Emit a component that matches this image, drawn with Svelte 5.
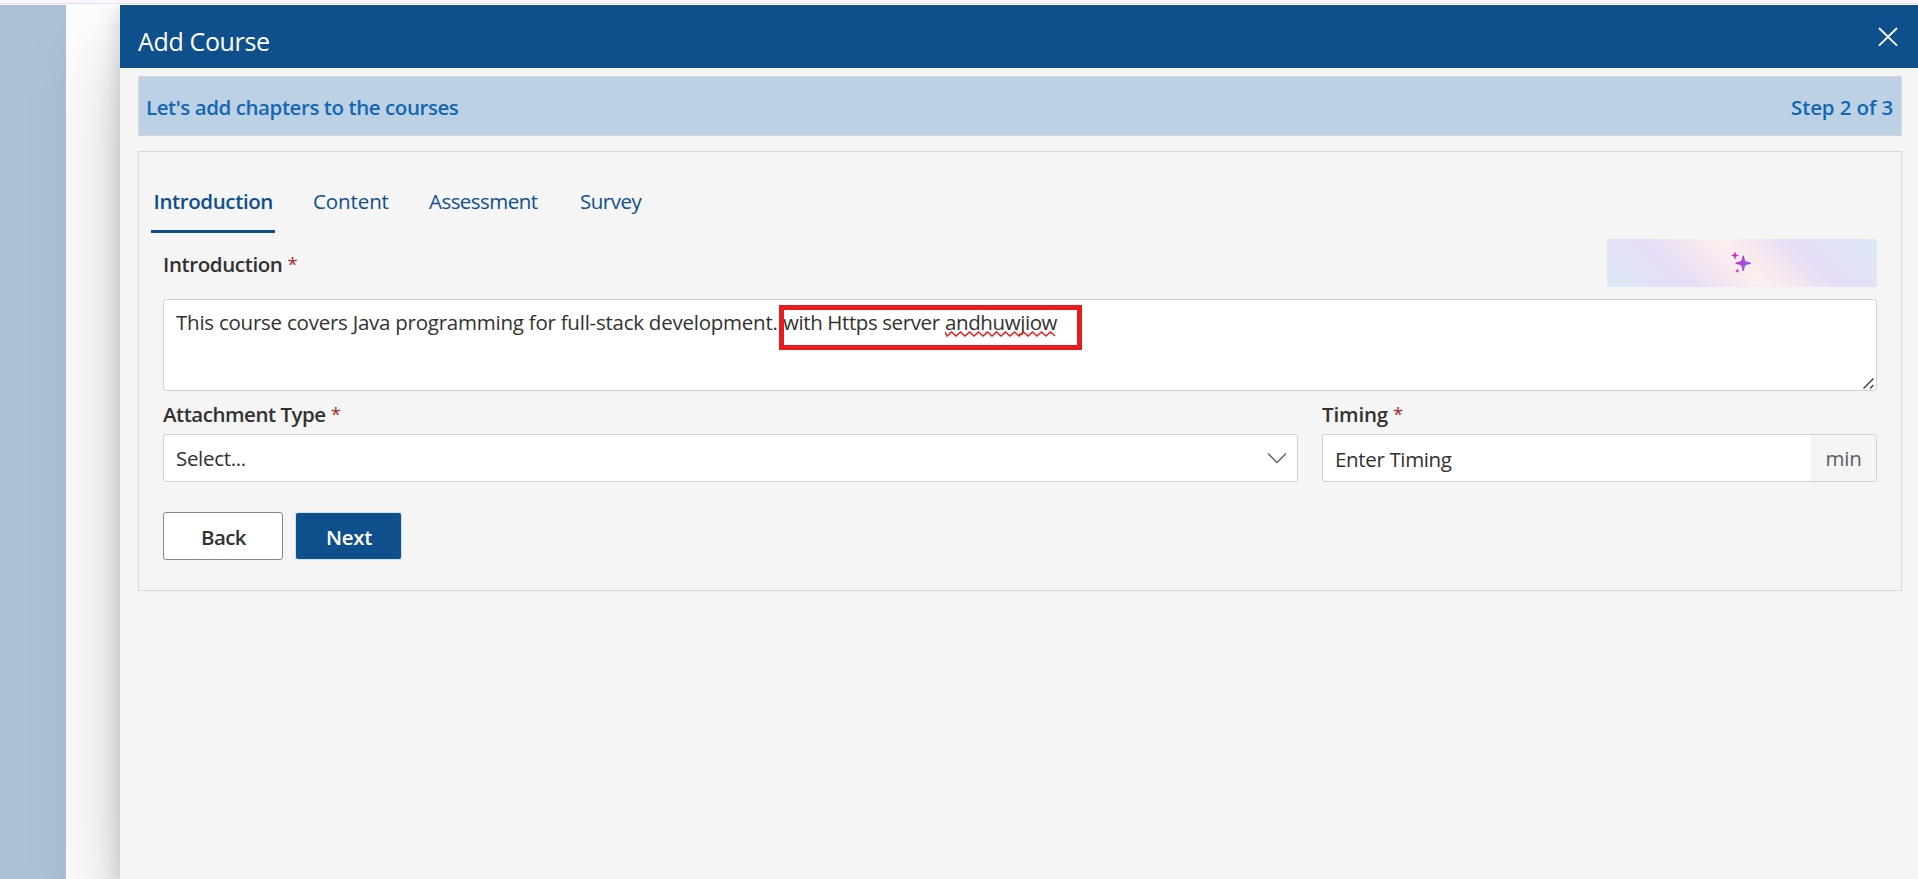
<script>
  const tabs = [
    { name: 'Introduction', cls: 'active' },
    { name: 'Content', cls: 'content' },
    { name: 'Assessment', cls: 'assessment' },
    { name: 'Survey', cls: 'survey' }
  ];
  const wave = 'M0 1 ' + Array.from({ length: 25 }, (_, i) => `L${2 + i * 4.5} ${i % 2 ? 1 : 5}`).join(' ');
</script>

<div class="page">
  <div class="topline"></div>
  <div class="stage">
    <aside></aside>
    <div class="gap"></div>
    <main>
      <header>
        <h1>Add Course</h1>
        <svg class="close" width="20" height="20" viewBox="0 0 20 20"><path d="M1 1 19 18.6M19 1 1 18.6" /></svg>
      </header>
      <section class="banner">
        <span class="lead">Let's add chapters to the courses</span>
        <span class="step">Step 2 of 3</span>
      </section>
      <section class="card">
        <nav>
          {#each tabs as tab}
            <button class="tab {tab.cls}">{tab.name}</button>
          {/each}
        </nav>
        <div class="intro-row">
          <div class="label intro"><span>Introduction</span><i>*</i></div>
          <button class="ai" aria-label="Generate">
            <svg width="24" height="24" viewBox="0 0 24 24">
              <defs>
                <linearGradient id="spark" gradientUnits="userSpaceOnUse" x1="2" y1="4" x2="22" y2="16">
                  <stop offset="0" stop-color="#ee10c0" />
                  <stop offset=".55" stop-color="#a948dc" />
                  <stop offset="1" stop-color="#6a78ee" />
                </linearGradient>
              </defs>
              <path fill="url(#spark)" d="M13.2 4.5c.4 0 .7.3.8.7l.7 3.2c.3 1.300.9 1.900 2.200 2.200l3.500.8c.9.2.9 1.400 0 1.600l-3.500.8c-1.300.3-1.900.9-2.200 2.200l-.7 3.400c-.2.9-1.400.9-1.600 0l-.7-3.400c-.3-1.300-.9-1.900-2.200-2.200l-3.400-.8c-.9-.2-.9-1.400 0-1.600l3.400-.8c1.300-.3 1.900-.9 2.200-2.200l.7-3.200c.1-.4.4-.7.8-.7z" />
              <path fill="#e31cc6" d="M5 .8Q5.700.8 5.900 3.600 8.700 3.900 8.700 4.500T5.900 5.400Q5.700 8.200 5 8.200T4.100 5.400Q1.300 5.100 1.300 4.500T4.100 3.600Q4.300.8 5 .8Z" />
              <path fill="#b844d8" d="M7.300 17.800Q7.800 19.400 9.400 20 7.800 20.500 7.300 22 6.800 20.500 5.200 20 6.800 19.400 7.300 17.800Z" />
            </svg>
          </button>
        </div>
        <div class="area">
          <span class="t1">This course covers Java programming for full-stack development.</span>
          <span class="t2">with Https server</span>
          <span class="t3">andhuwjiow<svg class="wave" width="112" height="7" viewBox="0 0 112 7"><path d={wave} /></svg></span>
          <div class="marker"></div>
          <svg class="grip" width="13" height="13" viewBox="0 0 13 13"><path d="M1.500 11.500 11.500 1.500M8 11.500 11.500 8" /></svg>
        </div>
        <div class="fields">
          <div>
            <div class="label attach"><span>Attachment Type</span><i>*</i></div>
            <div class="box select">
              <span>Select...</span>
              <svg width="20" height="12" viewBox="0 0 20 12"><path d="M1 1.500 10 10.500 19 1.500" /></svg>
            </div>
          </div>
          <div>
            <div class="label time"><span>Timing</span><i>*</i></div>
            <div class="box timing"><span>Enter Timing</span><em>min</em></div>
          </div>
        </div>
        <div class="actions">
          <button class="back">Back</button>
          <button class="next">Next</button>
        </div>
      </section>
    </main>
  </div>
</div>

<style>
  :global(body) { background: #fff; overflow: hidden; }
  .page { height: 879px; display: flex; flex-direction: column; font: 20.5px/28px "Open Sans", "Noto Sans", sans-serif; color: #323130; overflow: hidden; }
  .page * { box-sizing: border-box; }
  button { font: inherit; color: inherit; border: 0; background: none; padding: 0; margin: 0; }
  .topline { height: 5px; flex: none; background: linear-gradient(#fdf5fe 3px, #e4dbe8 3px 4px, #fcfafd 4px); }
  .stage { flex: 1; display: flex; overflow: hidden; }
  aside { width: 66px; background: #abc1d8; }
  .gap { width: 54px; background: #fff; }
  main { flex: 1; background: #f5f5f5; box-shadow: 0 38px 86px rgba(0, 0, 0, .22), 0 7px 21px rgba(0, 0, 0, .18); }
  header { height: 63px; background: #0f4f8b; color: #fff; display: flex; justify-content: space-between; padding: 20px 20px 0 18px; }
  h1 { margin: 0; font-size: 25px; line-height: 32px; font-weight: 400; letter-spacing: -.35px; }
  .close { margin-top: 2px; stroke: #fff; stroke-width: 1.800; fill: none; }
  .banner { margin: 8px 16px 0 18px; height: 60px; border: 1px solid #d5d7d8; background: #bdd1e5; color: #1267b4; font-weight: 600; display: flex; justify-content: space-between; align-items: center; padding: 2px 8px 0 7px; }
  .lead { letter-spacing: -.43px; }
  .step { letter-spacing: -.12px; }
  .card { margin: 15px 16px 0 18px; height: 440px; border: 1px solid #d8d8d8; padding: 26px 24px 0; }
  nav { display: flex; height: 55px; color: #0f4f8b; margin-left: -12px; }
  .tab { height: 55px; padding-bottom: 9px; text-align: left; }
  .active { width: 124px; margin-right: 38px; padding-left: 2.500px; font-weight: 600; letter-spacing: -.38px; border-bottom: 3px solid #0f4f8b; padding-bottom: 6px; }
  .content { width: 116px; letter-spacing: -.1px; }
  .assessment { width: 151px; letter-spacing: -.55px; }
  .survey { letter-spacing: -.5px; }
  .intro-row { height: 66px; padding-top: 6px; display: flex; justify-content: space-between; }
  .label { display: flex; gap: 5px; font-weight: 600; height: 28px; }
  .label i { color: #a4262c; font-style: normal; font-weight: 400; font-size: 18.5px; }
  .intro { margin-top: 11px; letter-spacing: -.38px; }
  .attach { letter-spacing: -.48px; }
  .time { letter-spacing: -.15px; }
  .ai { width: 270px; height: 48px; border-radius: 3px; background: linear-gradient(45deg, #dbe9f6, #e7ddf6 27%, #fdefee 50%, #e7ddf6 73%, #dbe9f6); display: flex; align-items: center; justify-content: center; }
  .area { position: relative; height: 92px; border: 1px solid #d0d0d0; border-radius: 3px; background: #fff; display: flex; padding: 8px 12px; white-space: pre; }
  .t1 { width: 607px; letter-spacing: -.24px; }
  .t2 { width: 162px; letter-spacing: -.4px; }
  .t3 { position: relative; letter-spacing: -.4px; }
  .wave { position: absolute; left: 0; top: 23px; fill: none; stroke: #f01818; stroke-width: 1.400; }
  .marker { position: absolute; left: 614.500px; top: 5px; width: 303px; height: 45px; border: 5px solid #e81c1e; }
  .grip { position: absolute; right: 1px; bottom: 0; stroke: #505050; stroke-width: 1.700; }
  .fields { display: grid; grid-template-columns: 1135px 555px; gap: 24px; padding-top: 9px; }
  .box { height: 48px; margin-top: 6px; border: 1px solid #d0d0d0; border-radius: 3px; background: #fff; display: flex; align-items: center; justify-content: space-between; }
  .select { padding: 0 10px 0 12px; letter-spacing: -.32px; }
  .select svg { fill: none; stroke: #605e5c; stroke-width: 1.300; }
  .timing { padding-left: 12px; letter-spacing: -.35px; }
  .timing span { padding-top: 2px; }
  em { width: 65px; height: 46px; line-height: 46px; text-align: center; background: #f4f4f4; color: #605e5c; font-style: normal; letter-spacing: -.2px; }
  .actions { display: flex; gap: 13px; padding-top: 30px; align-items: center; font-weight: 600; }
  .back { width: 120px; height: 48px; background: #fff; border: 1px solid #8a8886; border-radius: 3px; letter-spacing: -.6px; padding: 2px 0 0 1px; }
  .next { width: 105px; height: 46px; background: #0f4f8b; color: #fff; border-radius: 2px; box-shadow: 0 0 0 1px #d6dee6; padding: 2px 0 0 1px; letter-spacing: -.3px; }
</style>
